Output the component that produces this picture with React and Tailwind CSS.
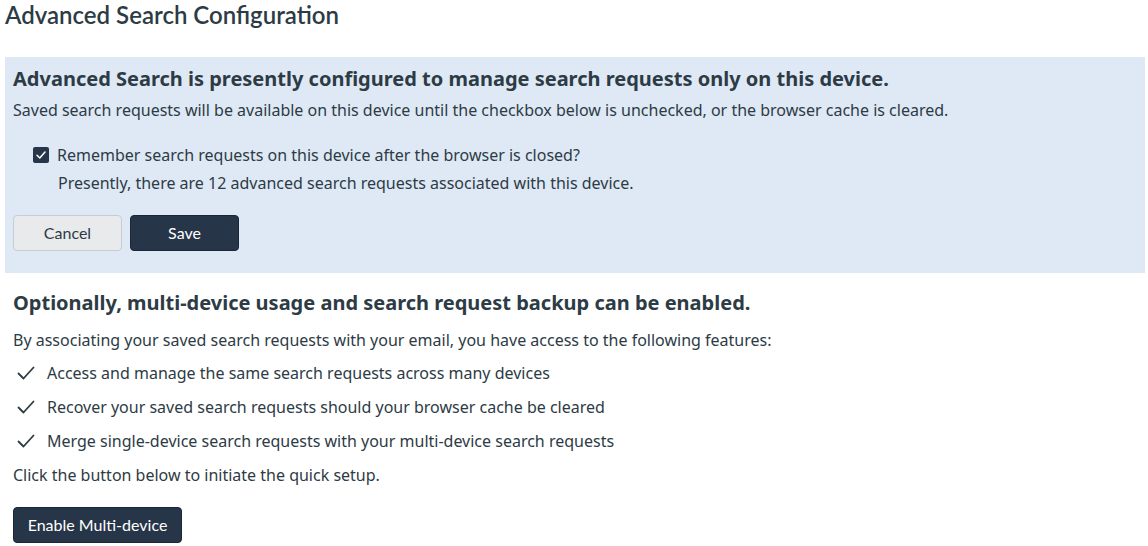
import { useState } from "react";

const features = [
    "Access and manage the same search requests across many devices",
    "Recover your saved search requests should your browser cache be cleared",
    "Merge single-device search requests with your multi-device search requests",
];

const CheckIcon = () => (
    <svg width="18" height="14" viewBox="0 0 18 14" fill="none" className="shrink-0">
        <path d="M1.5 7.5 L6.5 12.5 L16.5 1.5" stroke="#2d3b45" strokeWidth="1.8" strokeLinecap="round" strokeLinejoin="round" />
    </svg>
);

const App = () => {
    const [remember, setRemember] = useState(true);

    return (
        <div className="w-[1148px] bg-white text-[#2d3b45] font-['Noto_Sans',sans-serif]">
            {/* Page title */}
            <h1 className="px-[5px] h-[57px] font-['Lato',sans-serif] font-semibold text-[24px] leading-[30px]">
                Advanced Search Configuration
            </h1>

            {/* Single-device panel */}
            <div className="mx-[5px] w-[1140px] bg-[#dee9f5] px-[8px] pt-[8px] pb-[22px]">
                <h2 className="font-bold text-[20px] leading-[28px]">
                    Advanced Search is presently configured to manage search requests only on this device.
                </h2>
                <p className="text-[16px] leading-[22px] mt-[6px]">
                    Saved search requests will be available on this device until the checkbox below is unchecked, or the browser cache is cleared.
                </p>

                <div className="pl-[20px] mt-[23px]">
                    <label className="flex items-center gap-[8px] text-[16px] leading-[22px] cursor-pointer">
                        <button
                            type="button"
                            onClick={() => setRemember((prev) => !prev)}
                            className="w-[16px] h-[16px] rounded-[2px] bg-[#273549] flex items-center justify-center"
                            aria-label="Remember search requests"
                        >
                            {remember && (
                                <svg width="10" height="8" viewBox="0 0 10 8" fill="none">
                                    <path d="M1 4.2 L3.8 7 L9 1" stroke="white" strokeWidth="1.5" strokeLinecap="round" strokeLinejoin="round" />
                                </svg>
                            )}
                        </button>
                        Remember search requests on this device after the browser is closed?
                    </label>
                    <p className="pl-[25px] text-[16px] leading-[22px] mt-[6px]">
                        Presently, there are 12 advanced search requests associated with this device.
                    </p>
                </div>

                <div className="flex gap-[8px] mt-[21px] font-['Lato',sans-serif] text-[16px]">
                    <button className="w-[109px] h-[36px] rounded-[4px] bg-[#e8eaec] border border-[#c7cdd1] text-[#2d3b45]">
                        Cancel
                    </button>
                    <button className="w-[109px] h-[36px] rounded-[4px] bg-[#273549] border border-[#1b2636] text-white">
                        Save
                    </button>
                </div>
            </div>

            {/* Multi-device section */}
            <div className="px-[13px] pt-[16px]">
                <h2 className="font-bold text-[20px] leading-[28px]">
                    Optionally, multi-device usage and search request backup can be enabled.
                </h2>
                <p className="text-[16px] leading-[22px] mt-[12px]">
                    By associating your saved search requests with your email, you have access to the following features:
                </p>
                <ul className="mt-[11px] flex flex-col gap-[12px]">
                    {features.map((f) => (
                        <li key={f} className="flex items-center gap-[12px] pl-[4px] text-[16px] leading-[22px]">
                            <CheckIcon />
                            {f}
                        </li>
                    ))}
                </ul>
                <p className="text-[16px] leading-[22px] mt-[12px]">
                    Click the button below to initiate the quick setup.
                </p>
                <button className="mt-[21px] w-[169px] h-[36px] rounded-[4px] bg-[#273549] border border-[#1b2636] text-white font-['Lato',sans-serif] text-[16px]">
                    Enable Multi-device
                </button>
            </div>
        </div>
    );
};

export default App;
